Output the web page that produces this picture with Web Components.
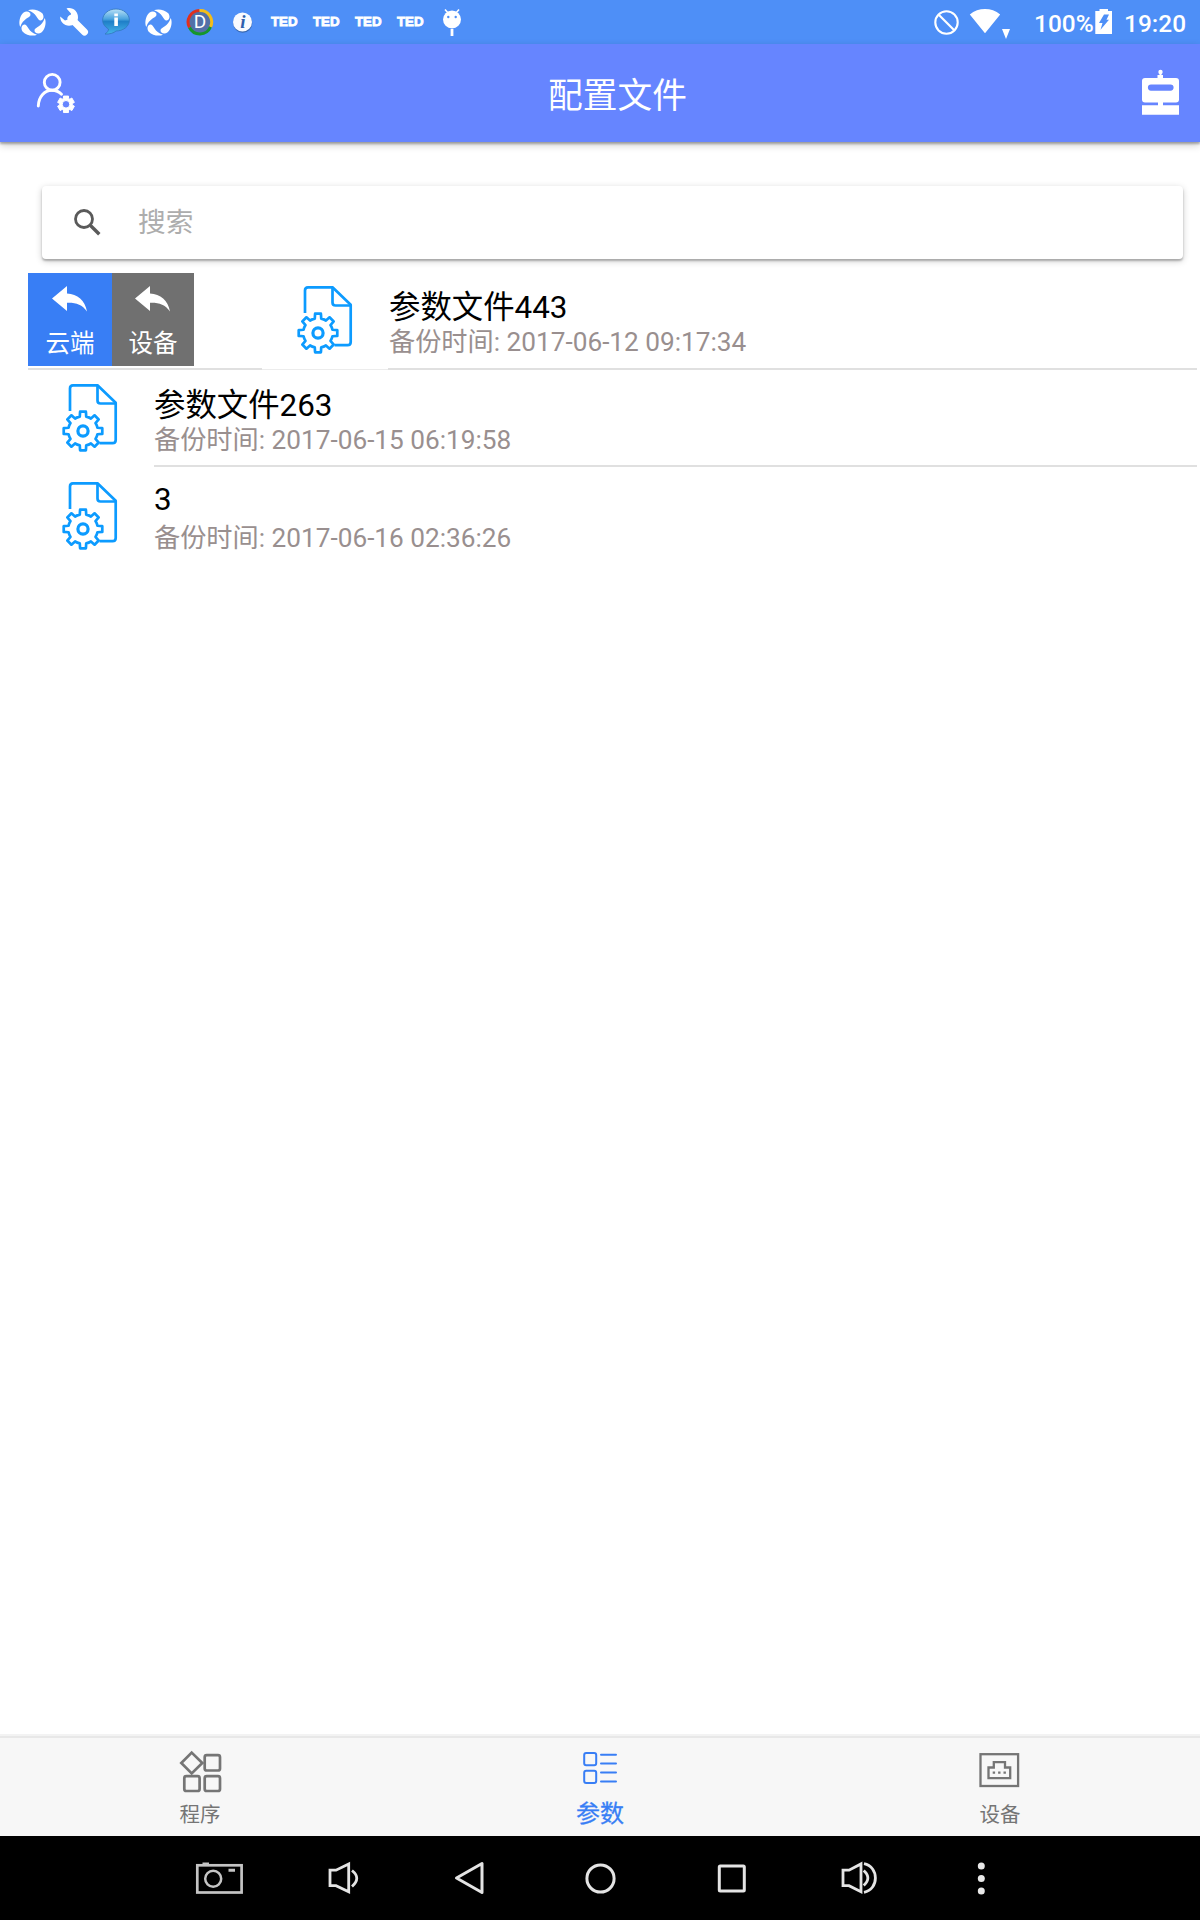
<!DOCTYPE html>
<html lang="zh-CN">
<head>
<meta charset="utf-8">
<title>配置文件</title>
<style>
html,body{margin:0;padding:0}
body{width:1200px;height:1920px;overflow:hidden;background:#fff;font-family:Roboto,"Noto Sans CJK SC",sans-serif}
</style>
</head>
<body>
<app-screen></app-screen>
<script>
function gear(cx, cy, ro, ri, n, wo, wi) {
  let d = '';
  const pt = (a, r) => (cx + Math.sin(a) * r).toFixed(2) + ' ' + (cy - Math.cos(a) * r).toFixed(2);
  for (let i = 0; i < n; i++) {
    const a = i * 2 * Math.PI / n;
    d += (i ? 'L' : 'M') + pt(a - wi, ri) + 'L' + pt(a - wo, ro) + 'L' + pt(a + wo, ro) + 'L' + pt(a + wi, ri);
    d += 'A' + ri + ' ' + ri + ' 0 0 1 ' + pt(a + 2 * Math.PI / n - wi, ri);
  }
  return d + 'Z';
}
const swirl = cx => `<g transform="translate(${cx} 22.5)" fill="#fff">` + [0, 90, 180, 270].map(a =>
  `<path transform="rotate(${a})" d="M-4.500-12.200C-1-14 6-13.200 9.800-9.200C12.200-6 10.800-1.600 7.600-2C4.500-2.600 4.500-9.500-4.500-12.200Z"/>`).join('') + '</g>';

/* name: [viewBox, drawing] */
const ICONS = {
  swirl: ['18 0 30 44', swirl(32.5)],
  wrench: ['58 0 32 44', '<path fill="none" stroke="#fff" stroke-width="7" stroke-linecap="round" d="M71 18.500L84.500 32"/><path fill="#fff" d="M66.500 8.500C72 6.500 78.500 11 78 18C77.500 23.500 71 27.500 65.500 25C62 23.500 60 20 60.200 16.500L65 20.500L70.500 18.500L71 13.500Z"/>'],
  bubble: ['100 0 32 44', '<defs><linearGradient id="b" x1="0" y1="0" x2="0" y2="1"><stop offset="0" stop-color="#b9e1f7"/><stop offset=".4" stop-color="#4aa3df"/><stop offset=".5" stop-color="#1f7fc8"/><stop offset="1" stop-color="#45b4ea"/></linearGradient></defs><path d="M116 9C123.500 9 129.400 13.800 129.400 20.200C129.400 26.500 123 31 116 31C114 33 109 34.500 105 34C107.500 32.500 108.500 30.500 108.500 29C105 27 102.600 24 102.600 20.200C102.600 13.800 108.500 9 116 9Z" fill="url(#b)" stroke="#3177bb" stroke-width=".8"/><path fill="#fff" d="M114.300 13.500h3.600v2.700h-3.600zM114.300 17.500h3.600v8.500h-3.600z"/>'],
  ring: ['185 0 30 44', '<circle cx="200" cy="22" r="11" fill="#5270a8"/><g fill="none" stroke-width="3"><path stroke="#e0301e" d="M199.500 10.500A11.500 11.500 0 0 0 189.500 27.500"/><path stroke="#f5bd18" d="M199.500 10.500A11.500 11.500 0 0 1 210.500 27"/><path stroke="#16962b" d="M189.500 27.500A11.600 11.600 0 0 0 210.500 27"/></g>'],
  info: ['230 0 26 44', '<circle cx="242.700" cy="23.200" r="9.500" fill="#2c5590" opacity=".7"/><circle cx="242.500" cy="22" r="9.500" fill="#f8faff"/>'],
  droid: ['440 0 24 44', '<path stroke="#fff" stroke-width="1.600" d="M448.500 13.500L445 9.500M455.500 13.500L459 9.500"/><circle cx="452" cy="19.500" r="9" fill="#fff"/><circle cx="448.300" cy="17" r="1.200" fill="#4e8ff7"/><circle cx="455.700" cy="17" r="1.200" fill="#4e8ff7"/><path fill="#fff" d="M450.600 29h2.800v7h-2.800z"/>'],
  none: ['932 0 30 44', '<g fill="none" stroke="#fff" stroke-width="2.100"><circle cx="946.500" cy="22.500" r="11.200"/><path d="M938.500 14.500L954.500 30.500"/></g>'],
  wifi: ['968 0 44 44', '<path fill="#fff" d="M969.800 14.500C978.500 7.300 991.500 7.300 1000.200 14.500L985 33.300ZM1002 29h8l-4 10z"/>'],
  battery: ['1093 0 20 44', '<path fill="#fff" d="M1094.300 11h4.200V9h8.500v2h4v23h-16.700z"/><path fill="#4e8ff7" d="M1103 14.500h5l-2.500 5.200h2.500l-8.500 10 2-6.700h-3.500z"/>'],
  user: ['30 60 50 60', '<g fill="none" stroke="#fff" stroke-width="2.900" stroke-linecap="round"><circle cx="52.200" cy="82.300" r="7.900"/><path d="M38.300 106C38.500 97 44.500 90.200 51.800 90.200C56 90.200 59 91.600 61.500 94.200"/></g><path fill="#fff" fill-rule="evenodd" stroke="#fff" stroke-linejoin="round" d="' + gear(66, 104.3, 8.6, 6.4, 6, .3, .4) + 'M69.800 104.300A3.800 3.800 0 1 0 62.200 104.300A3.800 3.800 0 1 0 69.800 104.300Z"/>'],
  robot: ['1136 60 50 60', '<circle cx="1160.500" cy="72" r="2.200" fill="#fff"/><path fill="#fff" fill-rule="evenodd" d="M1159.500 73h2v2h1.500v3h13Q1179 78 1179 81V99.500Q1179 102.500 1176 102.500H1163V105.300H1179V114.800H1142V105.300H1158V102.500H1145Q1142 102.500 1142 99.500V81Q1142 78 1145 78h12.500v-3h2zM1151 84.500a3 3 0 0 0 0 6.200h19.500a3 3 0 0 0 0-6.200z"/>'],
  search: ['66 200 42 44', '<g fill="none" stroke="#5a5a5a" stroke-width="2.800"><circle cx="84" cy="219" r="8.500"/><path stroke-width="3.400" d="M90.500 225.500L99.300 234.300"/></g>'],
  reply: ['52 284 36 28', '<path fill="#fff" d="M67 286V293.500C77.500 294 85 300.500 87 311.500C82 304.500 76 302.500 67 302.800V311L52 298.500Z"/>'],
  file: ['294 283 62 74', '<g fill="none" stroke="#0c9bff" stroke-width="2.700" stroke-linejoin="round"><path d="M305 313V290.500Q305 287.300 308 287.300H332.500L350.700 304.800V342Q350.700 345.200 347.500 345.200H334.500"/><path d="M332.500 287.300V302.500Q332.500 305.500 335.500 305.500H350.700"/><path fill="#fff" d="' + gear(318, 333, 19.5, 14.8, 8, .15, .22) + '"/><circle cx="318" cy="333" r="5.100" stroke-width="3.200"/></g>'],
  program: ['175 1746 50 50', '<g fill="none" stroke="#757575" stroke-width="2.700"><path d="M191.700 1752.600L202.300 1763.000L191.700 1773.400L181.300 1763.000Z"/><rect x="204.700" y="1755.200" width="15.300" height="15.300" rx="2"/><rect x="184.300" y="1776.200" width="15.300" height="14.800" rx="2"/><rect x="204.700" y="1776.200" width="15.300" height="14.800" rx="2"/></g>'],
  params: ['575 1746 50 50', '<g fill="none" stroke="#387ef5" stroke-width="2"><rect x="584.200" y="1753" width="12" height="12.300" rx="2"/><rect x="584.200" y="1770.700" width="12" height="12.300" rx="2"/><path stroke-linecap="round" d="M601 1754.800H616M601 1763.600H616M601 1772.500H616M601 1781.400H616"/></g>'],
  port: ['975 1746 50 50', '<g fill="none" stroke="#757575" stroke-width="2.300"><rect x="980.500" y="1754.200" width="37.600" height="31.800"/><path d="M988.500 1778.200V1767.500H993.800V1762.200H1005V1767.500H1010.200V1778.200Z"/><path stroke-dasharray="2.400 3" d="M992.700 1772.700H1006"/></g>'],
  camera: ['155 1836 127 84', '<g fill="none" stroke="#c4c4c4"><rect x="197.300" y="1865.300" width="44.300" height="27.200" stroke-width="2.700"/><circle cx="213.200" cy="1878.800" r="8" stroke-width="2.500"/><path stroke-width="3" d="M202.500 1863.900H209M228.500 1870.300H235"/></g>'],
  volDown: ['282 1836 127 84', '<g fill="none" stroke="#e4e4e4" stroke-width="2.800"><path d="M330 1870.200H336L348.700 1863.900V1891.800L336 1885.700H330Z"/><path d="M352 1870.500Q361.500 1878 352 1886.500" stroke-width="2.800"/></g>'],
  back: ['409 1836 127 84', '<path fill="none" stroke="#e4e4e4" stroke-width="3" stroke-linejoin="round" d="M456.500 1878L482 1863.500V1892.500Z"/>'],
  home: ['536 1836 127 84', '<circle cx="600.500" cy="1878.500" r="13.600" fill="none" stroke="#e4e4e4" stroke-width="3"/>'],
  recent: ['663 1836 127 84', '<rect x="719.300" y="1866" width="25" height="25" rx="1" fill="none" stroke="#e4e4e4" stroke-width="3"/>'],
  volUp: ['790 1836 127 84', '<g fill="none" stroke="#e4e4e4" stroke-width="2.800"><path d="M843 1870.200H849L861 1863.900V1891.800L849 1885.700H843Z"/><path d="M863.700 1870.500Q872 1878 863.700 1885.500M864 1863.700C879.200 1866.500 879.200 1889.500 864 1892.300"/></g>'],
  more: ['917 1836 127 84', '<g fill="#e8e8e8"><circle cx="981.300" cy="1866" r="3.500"/><circle cx="981.300" cy="1878.500" r="3.500"/><circle cx="981.300" cy="1891" r="3.500"/></g>']
};

function define(name, html, setup) {
  const t = document.createElement('template');
  t.innerHTML = html;
  customElements.define(name, class extends HTMLElement {
    constructor() {
      super();
      this.attachShadow({ mode: 'open' }).append(t.content.cloneNode(true));
    }
    connectedCallback() { if (setup) setup(this, this.shadowRoot); }
  });
}

define('ui-icon', '<style>:host{display:block;flex:none}svg{display:block}</style>', (el, root) => {
  const [vb, body] = ICONS[el.getAttribute('name')];
  const [, , w, h] = vb.split(' ');
  root.innerHTML += `<svg width="${w}" height="${h}" viewBox="${vb}">${body}</svg>`;
});

define('status-bar', `<style>
:host{display:flex;box-sizing:border-box;height:44px;padding:0 14px 0 18px;background:#4e8ff7;color:#fff;line-height:44px;white-space:nowrap}
.l,.r{display:flex}.r{margin-left:auto}
.l ui-icon{margin-right:var(--m,0)}
.ted{width:42px;font:bold 13.300px/44px "Liberation Sans",sans-serif;-webkit-text-stroke:.8px #fff}
.r span{font-size:24.400px;font-weight:500;line-height:47px}
.g{display:grid}.g>*{grid-area:1/1}.g span{place-self:center;font-size:19px}
</style>
<div class="l"><ui-icon name="swirl" style="--m:10px"></ui-icon><ui-icon name="wrench" style="--m:10px"></ui-icon><ui-icon name="bubble" style="--m:12px"></ui-icon><ui-icon name="swirl" style="--m:11px"></ui-icon>
<div class="g" style="margin-right:15px"><ui-icon name="ring"></ui-icon><span style="line-height:44px">D</span></div>
<div class="g" style="margin-right:15px"><ui-icon name="info"></ui-icon><span style="font:italic bold 19px/44px 'Liberation Serif',serif;color:#2d5fae">i</span></div>
<span class="ted">TED</span><span class="ted">TED</span><span class="ted">TED</span><span class="ted">TED</span><ui-icon name="droid" style="margin-left:1px"></ui-icon></div>
<div class="r"><ui-icon name="none"></ui-icon><ui-icon name="wifi" style="margin:0 22.500px 0 6px"></ui-icon><span>100%</span><ui-icon name="battery"></ui-icon><span style="margin-left:10.500px">19:20</span></div>`);

define('title-bar', `<style>
:host{display:flex;justify-content:space-between;box-sizing:border-box;height:98px;padding:16px 14px 0 30px;background:#6685ff;color:#fff;box-shadow:0 2px 2px rgba(0,0,0,.28),0 3px 8px rgba(0,0,0,.2)}
h1{margin:0 0 0 19px;font-size:34.700px;font-weight:400;line-height:72px}
</style><ui-icon name="user"></ui-icon><h1><slot></slot></h1><ui-icon name="robot"></ui-icon>`);

define('search-box', `<style>
:host{display:flex;align-items:center;box-sizing:border-box;height:73px;margin:44px 17px 0 42px;padding-left:24px;gap:30px;border-radius:4px;background:#fff;color:#adadad;font-size:27.700px;box-shadow:0 2px 2px rgba(0,0,0,.24),0 2px 7px rgba(0,0,0,.2)}
span{margin-top:-5px}ui-icon{margin-top:-1px}
</style><ui-icon name="search"></ui-icon><span><slot></slot></span>`);

define('swipe-button', `<style>
:host{display:flex;flex-direction:column;align-items:center;box-sizing:border-box;height:93px;padding-top:11px;gap:14px;color:#fff;font-size:24.500px;line-height:36px}
</style><ui-icon name="reply"></ui-icon><span><slot></slot></span>`);

define('file-row', `<style>
:host{display:flex;flex-direction:column;height:98px}
.body{display:flex;height:95px;box-sizing:border-box}
ui-icon{margin:12px 33px 0 59px}
:host([open]) ui-icon{margin-left:100px}
.text{padding-top:17px;white-space:nowrap}
b{display:block;font-weight:400;font-size:31.400px;line-height:40px;color:#000}
small{display:block;font-size:26.200px;line-height:28px;color:#998f8f}
:host([latin]) .text{padding-top:13px}:host([latin]) small{margin-top:4px}
.actions{display:none}
:host([open]) .actions{display:flex;padding:2px 0 0 28px}
.line{display:flex;height:2px;margin:1px 3px 0 154px}
.line i{height:2px;flex:1;background:#e0e0e0}
:host([open]) .line{margin:2px 3px 0 28px}
:host([open]) .line .a{flex:0 0 234px}
.line .b{display:none}
:host([open]) .line .b{display:block;flex:0 0 126px;height:1px;margin-top:1px;background:#ececec}
.line .c{display:none}:host([open]) .line .c{display:block}
:host([last]) .line{visibility:hidden}
</style>
<div class="body"><div class="actions"><slot name="actions"></slot></div><ui-icon name="file"></ui-icon><div class="text"><b><slot></slot></b><small><slot name="time"></slot></small></div></div>
<div class="line"><i class="a"></i><i class="b"></i><i class="c"></i></div>`);

define('app-screen', `<style>
:host{display:flex;flex-direction:column;width:1200px;height:1920px;background:#fff}
main{flex:1}
.list{padding-top:12px}
.tabs{display:flex;box-sizing:border-box;height:102px;padding-top:4px;background:linear-gradient(#f3f3f3 2px,#e8e8e8 2px 4px,#f7f7f7 4px)}
.tab{display:flex;flex:1;flex-direction:column;align-items:center;padding-top:8px}
nav{display:flex;height:84px;padding-left:155px;background:#000}
.tab span{color:#757575;font-size:20.500px;line-height:36px;margin-top:1px}
.tab.on span{color:#387ef5;font-size:24px;margin-top:0;-webkit-text-stroke:.3px #387ef5}
</style>
<status-bar></status-bar>
<title-bar>配置文件</title-bar>
<main>
<search-box>搜索</search-box>
<div class="list">
<file-row open>参数文件443<span slot="time">备份时间: 2017-06-12 09:17:34</span>
<swipe-button slot="actions" style="width:84px;background:#387ef5">云端</swipe-button><swipe-button slot="actions" style="width:82px;background:#707070">设备</swipe-button></file-row>
<file-row>参数文件263<span slot="time">备份时间: 2017-06-15 06:19:58</span></file-row>
<file-row last latin>3<span slot="time">备份时间: 2017-06-16 02:36:26</span></file-row>
</div>
</main>
<div class="tabs">
<div class="tab"><ui-icon name="program"></ui-icon><span>程序</span></div>
<div class="tab on"><ui-icon name="params"></ui-icon><span>参数</span></div>
<div class="tab"><ui-icon name="port"></ui-icon><span>设备</span></div>
</div>
<nav><ui-icon name="camera"></ui-icon><ui-icon name="volDown"></ui-icon><ui-icon name="back"></ui-icon><ui-icon name="home"></ui-icon><ui-icon name="recent"></ui-icon><ui-icon name="volUp"></ui-icon><ui-icon name="more"></ui-icon></nav>`);
</script>
</body>
</html>
